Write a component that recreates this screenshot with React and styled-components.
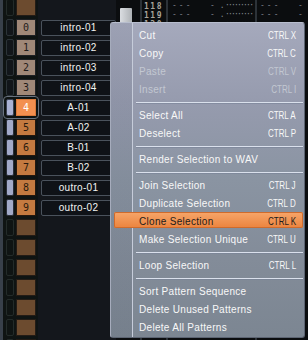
import React from 'react'
import styled, { createGlobalStyle } from 'styled-components'

const GlobalStyle = createGlobalStyle`
  html, body { margin: 0; padding: 0; background: #0b0d0f; }
  body { font-family: "Liberation Sans", Arial, sans-serif; }
`

const Screen = styled.div`
  position: relative;
  width: 308px;
  height: 340px;
  overflow: hidden;
  display: flex;
  background: #0b0d0f;
`

// ---- pattern sequence (left) ----
const Sequence = styled.div`
  width: 116px;
  flex-shrink: 0;
  display: flex;
`
const Edge = styled.div`
  width: 3px;
  background: #38404a;
`
const List = styled.div`
  flex: 1;
  margin-top: -1px;
  background: linear-gradient(to right, #0f1413 0, #0f1413 35px, #14171c 35px);
`
const Row = styled.div`
  height: 20px;
  display: flex;
  align-items: flex-start;
`
const Slot = styled.div`
  display: flex;
  gap: 2px;
  margin-left: 3px;
  border-radius: 1px;
  outline: ${p => (p.$selected ? '1px solid #68727e' : 'none')};
  outline-offset: 2px;
`
const toggleColors = {
  empty: ['#232b29', 'transparent'],
  idle: ['#2c3438', '#12161a'],
  active: ['#2a2e38', '#a2aac8'],
  selected: ['#3a4050', '#aab2d4'],
}
const Toggle = styled.div`
  width: 8px;
  height: 17px;
  box-sizing: border-box;
  border-radius: 2px;
  border: 1px solid ${p => toggleColors[p.$state][0]};
  background: ${p => toggleColors[p.$state][1]};
`
const numColors = {
  empty: ['#241c16', '#6c4b2f', 'transparent'],
  idle: ['#1e2024', '#a08878', '#1e1a18'],
  active: ['#24180f', '#c47a40', '#2a1a0e'],
  selected: ['#d8783a', '#f39050', '#ffffff'],
}
const Num = styled.div`
  width: 20px;
  height: 17px;
  box-sizing: border-box;
  padding-top: 1px;
  border: 1px solid ${p => numColors[p.$state][0]};
  background: ${p => numColors[p.$state][1]};
  color: ${p => numColors[p.$state][2]};
  font-family: "DejaVu Sans Mono", monospace;
  font-size: 10px;
  line-height: 14px;
  text-align: center;
`
const Name = styled.div`
  margin-left: 5px;
  margin-top: 1px;
  width: 75px;
  height: 16px;
  box-sizing: border-box;
  border: 1px solid #4a525c;
  border-radius: 2px;
  background: #0f1217;
  color: #f2f2f2;
  font-size: 10px;
  letter-spacing: 0.3px;
  line-height: 14px;
  text-align: center;
  white-space: nowrap;
`

// ---- pattern editor (behind the menu) ----
const Editor = styled.div`
  flex: 1;
  display: flex;
`
const ScrollCol = styled.div`
  width: 24px;
  box-sizing: border-box;
  padding: 8px 8px 0 4px;
`
const Thumb = styled.div`
  width: 12px;
  height: 40px;
  border-radius: 1px;
  background: linear-gradient(to right, #dadde1, #aeb2b6);
`
const NumCol = styled.div`
  width: 28px;
  box-sizing: border-box;
  padding: 3px 0 0 2px;
  border-left: 2px solid #2c3238;
  border-right: 2px solid #2c3238;
`
const LineNo = styled.div`
  height: 9px;
  font-family: "DejaVu Sans Mono", monospace;
  font-weight: bold;
  font-size: 8px;
  line-height: 8px;
  letter-spacing: 1.5px;
  color: #a8a49c;
`
const Track = styled.div`
  width: ${p => p.$width}px;
  box-sizing: border-box;
  padding: 1px 0 0 ${p => p.$pad}px;
  border-right: ${p => (p.$sep ? '2px solid #2c3238' : 'none')};
`
const TrackLine = styled.div`
  height: 9px;
  display: flex;
  font-family: "DejaVu Sans Mono", monospace;
  font-size: 8px;
  line-height: 9px;
  color: #80868e;
  white-space: nowrap;
`
const Cell = styled.span`
  width: ${p => p.$w}px;
  letter-spacing: ${p => p.$ls || 0}px;
  overflow: hidden;
`

// ---- context menu ----
const Menu = styled.div`
  position: absolute;
  left: 110px;
  top: 22px;
  width: 195px;
  box-sizing: border-box;
  padding: 3px 1px 1px 3px;
  border: 1px solid #5c6472;
  border-top-color: #b8bece;
  border-left-color: #a6acbc;
  border-radius: 3px;
  display: flex;
  flex-direction: column;
  background:
    linear-gradient(to right, transparent 21px, #c6ccda 21px, #c6ccda 22px, transparent 22px),
    linear-gradient(to right, rgba(20, 30, 50, 0.06) 21px, transparent 21px),
    linear-gradient(to bottom, #a5a9bc 0%, #969bae 25%, #8a94a2 50%, #838c99 75%, #7c8692 100%);
`
const Item = styled.div`
  height: 16px;
  margin-bottom: 2px;
  box-sizing: border-box;
  padding: 3px 7px 0 25px;
  display: flex;
  justify-content: space-between;
  font-size: 10px;
  letter-spacing: 0.3px;
  line-height: 13px;
  border-radius: 2px;
  white-space: nowrap;
  color: ${p => (p.$active ? '#1c1c1c' : p.$disabled ? '#c3c8d2' : '#f8f8f8')};
  background: ${p => (p.$active ? 'linear-gradient(to bottom, #f7a66a, #eb833d)' : 'transparent')};
  box-shadow: ${p => (p.$active ? 'inset 0 0 0 1px #cf6b2c' : 'none')};
`
const Shortcut = styled.span`
  display: inline-block;
  transform: scaleX(0.8);
  transform-origin: right center;
  letter-spacing: 0;
`
const Separator = styled.div`
  height: 8px;
  box-sizing: border-box;
  padding: 4px 0 0 22px;
`
const SepLine = styled.div`
  height: 1px;
  background: #dae0ec;
  box-shadow: 0 1px 0 rgba(120, 130, 150, 0.6);
`

const patterns = [
  { n: '0', name: 'intro-01', state: 'idle' },
  { n: '1', name: 'intro-02', state: 'idle' },
  { n: '2', name: 'intro-03', state: 'idle' },
  { n: '3', name: 'intro-04', state: 'idle' },
  { n: '4', name: 'A-01', state: 'selected' },
  { n: '5', name: 'A-02', state: 'active' },
  { n: '6', name: 'B-01', state: 'active' },
  { n: '7', name: 'B-02', state: 'active' },
  { n: '8', name: 'outro-01', state: 'active' },
  { n: '9', name: 'outro-02', state: 'active' },
]
const rows = [
  { state: 'empty' },
  ...patterns,
  ...Array.from({ length: 7 }, () => ({ state: 'empty' })),
]

const menu = [
  { label: 'Cut', key: 'CTRL X' },
  { label: 'Copy', key: 'CTRL C' },
  { label: 'Paste', key: 'CTRL V', disabled: true },
  { label: 'Insert', key: 'CTRL I', disabled: true },
  'sep',
  { label: 'Select All', key: 'CTRL A' },
  { label: 'Deselect', key: 'CTRL P' },
  'sep',
  { label: 'Render Selection to WAV' },
  'sep',
  { label: 'Join Selection', key: 'CTRL J' },
  { label: 'Duplicate Selection', key: 'CTRL D' },
  { label: 'Clone Selection', key: 'CTRL K', active: true },
  { label: 'Make Selection Unique', key: 'CTRL U' },
  'sep',
  { label: 'Loop Selection', key: 'CTRL L' },
  'sep',
  { label: 'Sort Pattern Sequence' },
  { label: 'Delete Unused Patterns' },
  { label: 'Delete All Patterns' },
]

export default function App() {
  return (
    <>
      <GlobalStyle />
      <Screen>
        <Sequence>
          <Edge />
          <List>
            {rows.map((r, i) => (
              <Row key={i}>
                <Slot $selected={r.state === 'selected'}>
                  <Toggle $state={r.state} />
                  <Num $state={r.state}>{r.n}</Num>
                </Slot>
                {r.name && <Name>{r.name}</Name>}
              </Row>
            ))}
          </List>
        </Sequence>

        <Editor>
          <ScrollCol>
            <Thumb />
          </ScrollCol>
          <NumCol>
            <LineNo>118</LineNo>
            <LineNo>119</LineNo>
            <LineNo>120</LineNo>
          </NumCol>
          <Track $width={89} $pad={4} $sep>
            {[0, 1, 2].map(i => (
              <TrackLine key={i}>
                <Cell $w={38} $ls={2}>---</Cell>
                <Cell $w={15}>- .</Cell>
                <Cell $w={30} $ls={-1.8}>·········</Cell>
              </TrackLine>
            ))}
          </Track>
          <Track $width={51} $pad={3}>
            {[0, 1, 2].map(i => (
              <TrackLine key={i}>
                <Cell $w={38} $ls={2}>---</Cell>
                <Cell $w={10}>-</Cell>
              </TrackLine>
            ))}
          </Track>
        </Editor>

        <Menu>
          {menu.map((m, i) =>
            m === 'sep' ? (
              <Separator key={i}>
                <SepLine />
              </Separator>
            ) : (
              <Item key={i} $active={m.active} $disabled={m.disabled}>
                <span>{m.label}</span>
                {m.key && <Shortcut>{m.key}</Shortcut>}
              </Item>
            )
          )}
        </Menu>
      </Screen>
    </>
  )
}
